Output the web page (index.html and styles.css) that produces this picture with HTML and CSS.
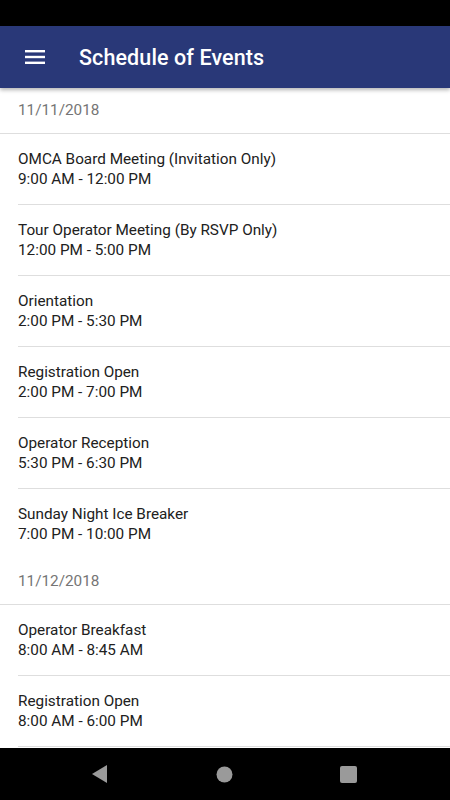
FILE: index.html
```html
<!DOCTYPE html>
<html lang="en">
<head>
    <meta charset="UTF-8">
    <meta name="viewport" content="width=device-width, initial-scale=1.0">
    <title>Schedule of Events</title>
    <link rel="stylesheet" href="styles.css">
</head>
<body>
    <div class="phone">
        <div class="status-bar"></div>
        <header class="app-bar">
            <svg class="menu-icon" width="20" height="14" viewBox="0 0 20 14">
                <rect x="0" y="0" width="20" height="2.4" fill="#fff"/>
                <rect x="0" y="5.8" width="20" height="2.4" fill="#fff"/>
                <rect x="0" y="11.6" width="20" height="2.4" fill="#fff"/>
            </svg>
            <h1>Schedule of Events</h1>
        </header>
        <main class="list">
            <div class="date">11/11/2018</div>
            <div class="item">
                <div>OMCA Board Meeting (Invitation Only)</div>
                <div>9:00 AM - 12:00 PM</div>
            </div>
            <div class="item">
                <div>Tour Operator Meeting (By RSVP Only)</div>
                <div>12:00 PM - 5:00 PM</div>
            </div>
            <div class="item">
                <div>Orientation</div>
                <div>2:00 PM - 5:30 PM</div>
            </div>
            <div class="item">
                <div>Registration Open</div>
                <div>2:00 PM - 7:00 PM</div>
            </div>
            <div class="item">
                <div>Operator Reception</div>
                <div>5:30 PM - 6:30 PM</div>
            </div>
            <div class="item">
                <div>Sunday Night Ice Breaker</div>
                <div>7:00 PM - 10:00 PM</div>
            </div>
            <div class="date">11/12/2018</div>
            <div class="item">
                <div>Operator Breakfast</div>
                <div>8:00 AM - 8:45 AM</div>
            </div>
            <div class="item">
                <div>Registration Open</div>
                <div>8:00 AM - 6:00 PM</div>
            </div>
        </main>
        <nav class="nav-bar">
            <svg width="16" height="18" viewBox="0 0 16 18"><path d="M15 0 L15 18 L0 9 Z" fill="#9a9a9a"/></svg>
            <svg width="17" height="17" viewBox="0 0 17 17"><circle cx="8.5" cy="8.5" r="8" fill="#9a9a9a"/></svg>
            <svg width="17" height="17" viewBox="0 0 17 17"><rect x="0" y="0" width="17" height="17" rx="2" fill="#9a9a9a"/></svg>
        </nav>
    </div>
</body>
</html>
```

FILE: styles.css
```css
body {
    margin: 0;
    font-family: Roboto, "Noto Sans", sans-serif;
}
.phone {
    width: 450px;
    height: 800px;
    display: flex;
    flex-direction: column;
    background: #fff;
    overflow: hidden;
}
.status-bar {
    height: 26px;
    background: #000;
    flex-shrink: 0;
}
.app-bar {
    height: 62px;
    background: #293878;
    display: flex;
    align-items: center;
    padding-left: 25px;
    flex-shrink: 0;
    box-shadow: 0 2px 4px rgba(0, 0, 0, 0.3);
    position: relative;
    z-index: 1;
}
.app-bar h1 {
    margin: 0 0 0 34px;
    color: #fff;
    font-size: 21.5px;
    font-weight: 500;
    letter-spacing: 0.1px;
}
.list {
    flex: 1;
    overflow: hidden;
}
.date {
    height: 45px;
    line-height: 45px;
    padding-left: 18px;
    color: #757575;
    font-size: 15.3px;
    border-bottom: 1px solid #dedede;
}
.item {
    height: 70px;
    margin-left: 18px;
    border-bottom: 1px solid #dedede;
    display: flex;
    flex-direction: column;
    justify-content: center;
    font-size: 15.3px;
    line-height: 20px;
    color: #212121;
}
.item:nth-child(7) {
    border-bottom: none;
}
.nav-bar {
    height: 52px;
    background: #000;
    flex-shrink: 0;
    display: flex;
    align-items: center;
    justify-content: space-between;
    padding: 0 93px 0 92px;
}
```
